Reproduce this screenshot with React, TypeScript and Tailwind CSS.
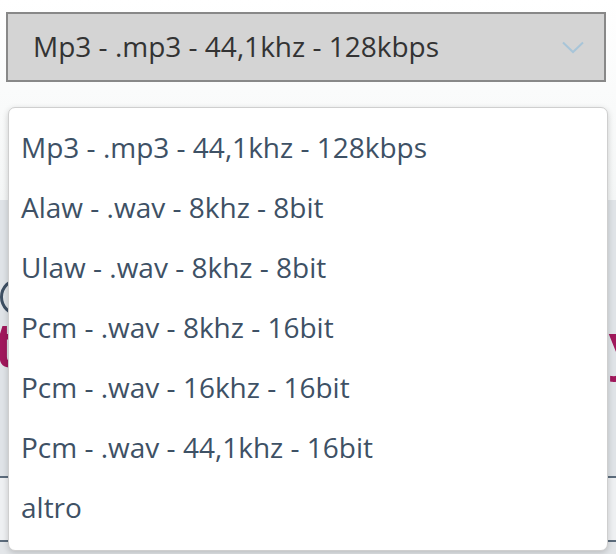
const formats = [
  'Mp3 - .mp3 - 44,1khz - 128kbps',
  'Alaw - .wav - 8khz - 8bit',
  'Ulaw - .wav - 8khz - 8bit',
  'Pcm - .wav - 8khz - 16bit',
  'Pcm - .wav - 16khz - 16bit',
  'Pcm - .wav - 44,1khz - 16bit',
  'altro',
];

const Chevron = () => (
  <svg width="22" height="13" viewBox="0 0 22 13" fill="none">
    <path d="M1 1.5 L11 11 L21 1.5" stroke="#a8c5d8" strokeWidth="2" />
  </svg>
);

export default function App() {
  const selected = formats[0];

  return (
    <div className="relative h-[554px] w-full overflow-hidden bg-white font-['Open_Sans',sans-serif]">
      {/* page behind the open list */}
      <div className="flex h-[200px] flex-col bg-gradient-to-b from-white to-[#f4f6f6] px-[6px] pt-[12px]">
        <div className="flex h-[70px] w-[600px] items-center justify-between border-2 border-[#888888] bg-[#d4d4d4] pl-[25px] pr-[20px]">
          <span className="-mt-[2px] text-[28px] text-[#333333]">{selected}</span>
          <Chevron />
        </div>
      </div>

      <div className="flex h-[276px] flex-col bg-[#dfe3e7] pt-[78px]">
        <div className="h-[38px] w-[38px] rounded-full border-[3px] border-[#3d4f63]"></div>
        <div className="-mt-[4px] flex justify-between text-[62px] font-semibold leading-none text-[#a0185c]">
          <span className="-ml-[6px]">t</span>
          <span className="-mr-[26px]">y</span>
        </div>
      </div>
      <div className="h-[66px] border-y-2 border-[#5c6c7c] bg-[#eef0f2]"></div>
      <div className="h-[12px] bg-[#e3e6e9]"></div>

      {/* open dropdown list */}
      <ul className="absolute left-[8px] top-[107px] w-[600px] rounded-[7px] border border-[#cfcfcf] bg-white pb-[13px] pt-[9px] shadow-[0_2px_6px_rgba(0,0,0,0.18)]">
        {formats.map((f) => (
          <li key={f} className="flex h-[60px] items-center px-[12px] text-[28px] text-[#3e5165]">
            {f}
          </li>
        ))}
      </ul>
    </div>
  );
}
